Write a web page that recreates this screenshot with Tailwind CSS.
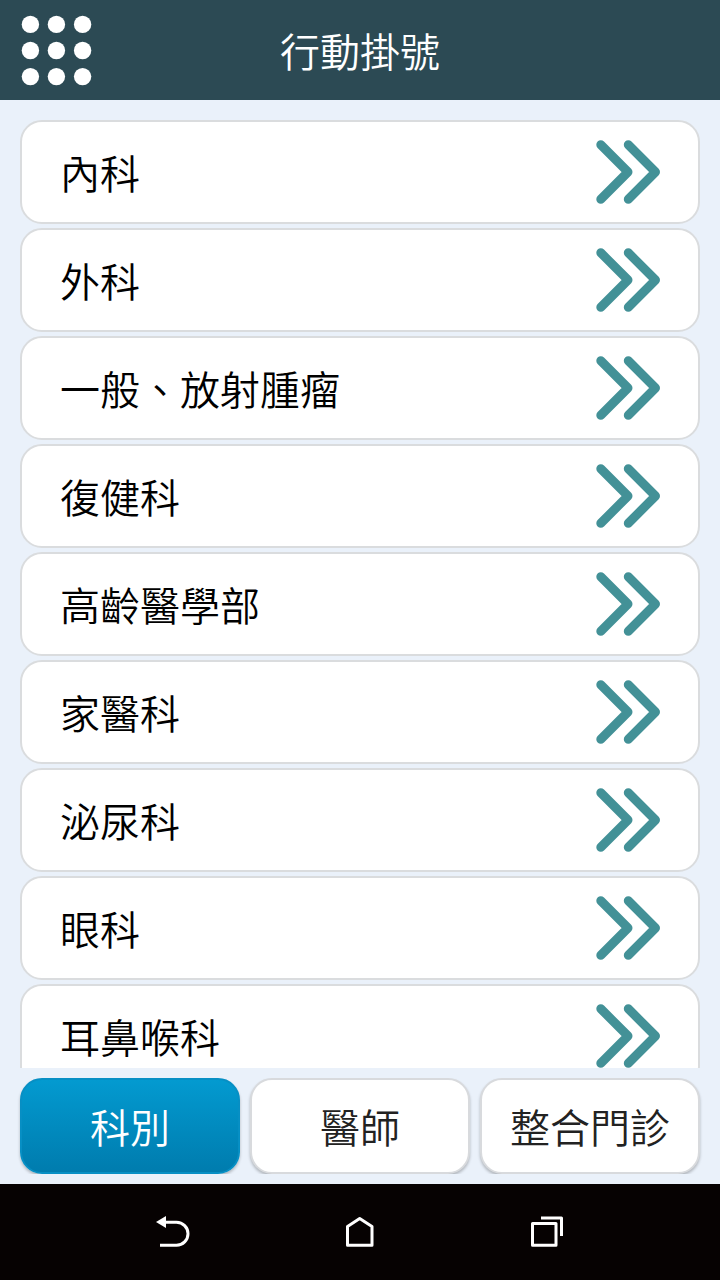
<!DOCTYPE html>
<html lang="zh-Hant">
<head>
<meta charset="utf-8">
<title>行動掛號</title>
<script src="https://cdn.jsdelivr.net/npm/@tailwindcss/browser@4"></script>
</head>
<body class="flex h-[1280px] w-[720px] flex-col overflow-hidden bg-[#eaf1fa] font-['Noto_Sans_CJK_TC',sans-serif] text-[40px] leading-none font-[350] text-black">
<svg class="hidden">
  <symbol id="more" viewBox="0 0 66 66"><path d="M5.8 5.8 33 33 5.8 60.2M33.3 5.8 60.5 33 33.3 60.2" fill="none" stroke="#439197" stroke-width="9" stroke-linecap="round" stroke-linejoin="round"/></symbol>
</svg>
<header class="relative flex h-[100px] shrink-0 items-center justify-center bg-[#2c4a54] text-white">
  <button class="absolute top-[15px] left-[21px]" aria-label="選單">
    <svg class="block size-[71px]" viewBox="0 0 71 71" fill="#fff"><circle cx="9.4" cy="9.4" r="8.7"/><circle cx="35.4" cy="9.4" r="8.7"/><circle cx="61.6" cy="9.4" r="8.7"/><circle cx="9.4" cy="35.5" r="8.7"/><circle cx="35.4" cy="35.5" r="8.7"/><circle cx="61.6" cy="35.5" r="8.7"/><circle cx="9.4" cy="61.6" r="8.7"/><circle cx="35.4" cy="61.6" r="8.7"/><circle cx="61.6" cy="61.6" r="8.7"/></svg>
  </button>
  <h1 class="font-[350]">行動掛號</h1>
</header>
<main class="h-[968px] shrink-0 overflow-hidden px-5 pt-5">
  <ul class="flex flex-col gap-1">
    <li class="flex h-[104px] shrink-0 items-center justify-between rounded-[22px] border-2 border-[#dadcde] bg-white pr-[37px] pl-[38px]"><span>內科</span><svg class="size-[66px]"><use href="#more"/></svg></li>
    <li class="flex h-[104px] shrink-0 items-center justify-between rounded-[22px] border-2 border-[#dadcde] bg-white pr-[37px] pl-[38px]"><span>外科</span><svg class="size-[66px]"><use href="#more"/></svg></li>
    <li class="flex h-[104px] shrink-0 items-center justify-between rounded-[22px] border-2 border-[#dadcde] bg-white pr-[37px] pl-[38px]"><span>一般、放射腫瘤</span><svg class="size-[66px]"><use href="#more"/></svg></li>
    <li class="flex h-[104px] shrink-0 items-center justify-between rounded-[22px] border-2 border-[#dadcde] bg-white pr-[37px] pl-[38px]"><span>復健科</span><svg class="size-[66px]"><use href="#more"/></svg></li>
    <li class="flex h-[104px] shrink-0 items-center justify-between rounded-[22px] border-2 border-[#dadcde] bg-white pr-[37px] pl-[38px]"><span>高齡醫學部</span><svg class="size-[66px]"><use href="#more"/></svg></li>
    <li class="flex h-[104px] shrink-0 items-center justify-between rounded-[22px] border-2 border-[#dadcde] bg-white pr-[37px] pl-[38px]"><span>家醫科</span><svg class="size-[66px]"><use href="#more"/></svg></li>
    <li class="flex h-[104px] shrink-0 items-center justify-between rounded-[22px] border-2 border-[#dadcde] bg-white pr-[37px] pl-[38px]"><span>泌尿科</span><svg class="size-[66px]"><use href="#more"/></svg></li>
    <li class="flex h-[104px] shrink-0 items-center justify-between rounded-[22px] border-2 border-[#dadcde] bg-white pr-[37px] pl-[38px]"><span>眼科</span><svg class="size-[66px]"><use href="#more"/></svg></li>
    <li class="flex h-[104px] shrink-0 items-center justify-between rounded-[22px] border-2 border-[#dadcde] bg-white pr-[37px] pl-[38px]"><span>耳鼻喉科</span><svg class="size-[66px]"><use href="#more"/></svg></li>
  </ul>
</main>
<div class="h-[116px] shrink-0 px-5 pt-[10px]">
  <div class="-mx-1 grid h-24 grid-cols-3 gap-[10px] overflow-hidden px-1 text-[#222]">
    <button class="flex h-24 items-center justify-center rounded-[22px] border-2 border-[#078fc4] bg-linear-to-b from-[#039ad0] to-[#007cae] text-white shadow-[0_2px_3px_rgba(0,0,0,0.25)]">科別</button>
    <button class="flex h-24 items-center justify-center rounded-[22px] border-2 border-[#d8dadd] bg-white shadow-[0_2px_3px_rgba(0,0,0,0.25)]">醫師</button>
    <button class="flex h-24 items-center justify-center rounded-[22px] border-2 border-[#d8dadd] bg-white shadow-[0_2px_3px_rgba(0,0,0,0.25)]">整合門診</button>
  </div>
</div>
<nav class="flex h-24 shrink-0 items-center bg-[#060202] px-[156px] pb-1">
  <svg class="h-9 w-[34px]" viewBox="0 0 34 36" fill="none"><path d="M8 10.5H20.5A11.5 11.5 0 0 1 20.5 33.5H4" transform="translate(0 -.3)" stroke="#fff" stroke-width="3"/><path d="M0 10 10 4v12Z" fill="#fff"/></svg>
  <svg class="ml-[155px] h-9 w-[30px]" viewBox="0 0 30 36" fill="none"><path d="M2.5 14.5 14.7 6.5 27 14.5V33.2H2.5Z" stroke="#fff" stroke-width="3" stroke-linejoin="round"/></svg>
  <svg class="ml-[155px] h-9 w-[34px]" viewBox="0 0 34 36" fill="none" stroke="#fff" stroke-width="3" stroke-linejoin="round"><path d="M2.5 11.5h23.5v21.7H2.5ZM11 6h20.5v18"/></svg>
</nav>
</body>
</html>
